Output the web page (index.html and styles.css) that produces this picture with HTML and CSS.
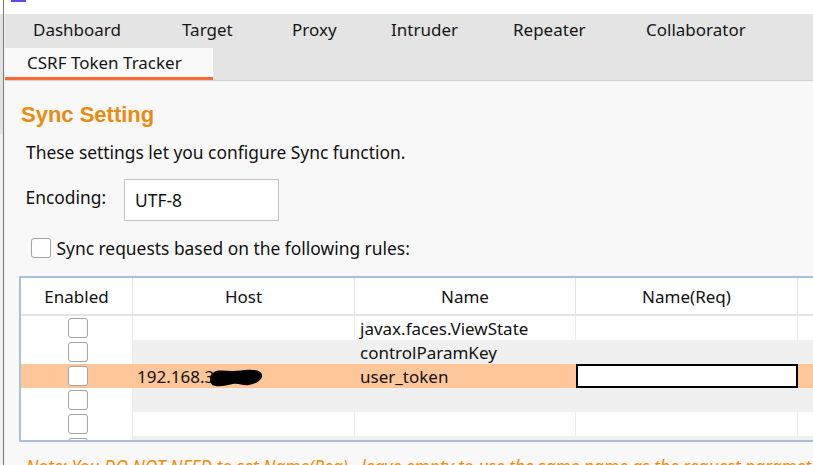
FILE: index.html
```html
<!DOCTYPE html>
<html>
<head>
<meta charset="utf-8">
<title>CSRF Token Tracker</title>
<link rel="stylesheet" href="styles.css">
</head>
<body>
<div class="screen">
  <div class="sliver"></div>
  <div class="app">
    <div class="topstrip"><span class="mark"></span></div>
    <div class="window">
      <div class="tabbar">
        <div class="main-tabs">
          <div class="tab">Dashboard</div>
          <div class="tab">Target</div>
          <div class="tab">Proxy</div>
          <div class="tab">Intruder</div>
          <div class="tab">Repeater</div>
          <div class="tab">Collaborator</div>
        </div>
        <div class="sub-tabs">
          <div class="subtab">CSRF Token Tracker</div>
        </div>
      </div>
      <div class="content">
        <h1 class="title">Sync Setting</h1>
        <p class="desc">These settings let you configure Sync function.</p>
        <div class="enc-row">
          <span class="enc-label">Encoding:</span>
          <div class="text-input">UTF-8</div>
        </div>
        <div class="check-row">
          <span class="cb"></span>
          <span class="check-label">Sync requests based on the following rules:</span>
        </div>
        <div class="rules">
          <div class="thead">
            <div class="th">Enabled</div>
            <div class="th">Host</div>
            <div class="th">Name</div>
            <div class="th">Name(Req)</div>
            <div class="th"></div>
          </div>
          <div class="tbody">
            <div class="tr">
              <div class="td cb-cell"><span class="cb"></span></div>
              <div class="td"></div>
              <div class="td">javax.faces.ViewState</div>
              <div class="td"></div>
              <div class="td"></div>
            </div>
            <div class="tr alt">
              <div class="td cb-cell"><span class="cb"></span></div>
              <div class="td"></div>
              <div class="td">controlParamKey</div>
              <div class="td"></div>
              <div class="td"></div>
            </div>
            <div class="tr sel">
              <div class="td cb-cell"><span class="cb"></span></div>
              <div class="td host">192.168.3<svg class="redact" viewBox="0 0 54 18" width="54" height="18"><path d="M2,7 C0,11 1,16 6,17 C12,18 18,16 24,15 C30,14 34,17 40,16 C46,15 52,12 53,8 C54,4 50,1 44,1 C36,0 30,2 24,2 C18,2 12,1 7,2 C4,3 3,5 2,7 Z" fill="#000"/></svg></div>
              <div class="td">user_token</div>
              <div class="td edit-cell"><div class="cell-input"></div></div>
              <div class="td"></div>
            </div>
            <div class="tr alt">
              <div class="td cb-cell"><span class="cb"></span></div>
              <div class="td"></div>
              <div class="td"></div>
              <div class="td"></div>
              <div class="td"></div>
            </div>
            <div class="tr">
              <div class="td cb-cell"><span class="cb"></span></div>
              <div class="td"></div>
              <div class="td"></div>
              <div class="td"></div>
              <div class="td"></div>
            </div>
            <div class="tr alt">
              <div class="td cb-cell"><span class="cb"></span></div>
              <div class="td"></div>
              <div class="td"></div>
              <div class="td"></div>
              <div class="td"></div>
            </div>
          </div>
        </div>
        <p class="note">Note: You DO NOT NEED to set Name(Req) , leave empty to use the same name as the request parameter.</p>
      </div>
    </div>
  </div>
</div>
</body>
</html>
```

FILE: styles.css
```css
* {
  box-sizing: border-box;
}

html,
body {
  margin: 0;
  padding: 0;
}

body {
  width: 813px;
  height: 465px;
  overflow: hidden;
  background: #ffffff;
  font-family: "Noto Sans", "Open Sans", sans-serif;
  color: #111111;
}

.screen {
  display: flex;
  height: 465px;
}

.sliver {
  flex: none;
  width: 4px;
  background: linear-gradient(#ffffff 0 14px, #e2e2e2 14px 134px, #f2f2f2 134px);
  border-right: 1px solid #7a7a7a;
}

.app {
  flex: 1;
  min-width: 0;
  display: flex;
  flex-direction: column;
}

.topstrip {
  flex: none;
  height: 14px;
  background: #ffffff;
  padding-left: 7px;
}

.mark {
  display: block;
  width: 15px;
  height: 2px;
  background: #5a4ff5;
}

.window {
  flex: 1;
  min-height: 0;
  overflow: hidden;
  border-left: 1px solid #f4f4f4;
  background: #f8f8f8;
  display: flex;
  flex-direction: column;
}

/* tabs */
.tabbar {
  flex: none;
  background: #e4e4e4;
  border-bottom: 1px solid #d3d5d5;
  font-size: 17px;
  color: #161616;
}

.main-tabs {
  display: grid;
  grid-template-columns: 149px 110px 99px 122px 133px auto;
  height: 34px;
}

.tab {
  padding: 4px 0 0 28px;
  line-height: 24px;
  white-space: nowrap;
}

.sub-tabs {
  display: flex;
  height: 32px;
}

.subtab {
  width: 208px;
  padding: 3px 0 0 22px;
  line-height: 24px;
  background: #f9f9f9;
  border-bottom: 3px solid #ff6a33;
  white-space: nowrap;
}

/* content */
.content {
  flex: 1;
  min-height: 0;
  padding: 20px 0 0 14px;
  background: #f8f8f8;
  font-size: 17.4px;
  line-height: 24px;
}

.title {
  margin: 0 0 0 2px;
  font: bold 22px/28px "Liberation Sans", Arial, sans-serif;
  color: #e98b10;
}

.desc {
  margin: 11px 0 0 7px;
}

.enc-row {
  display: flex;
  align-items: flex-start;
  margin: 15px 0 0 6.5px;
}

.enc-label {
  margin-top: 5.5px;
  width: 98.5px;
  white-space: nowrap;
}

.text-input {
  width: 155px;
  height: 42px;
  border: 1px solid #c6c6c6;
  background: #ffffff;
  padding-left: 10px;
  line-height: 41px;
}

.check-row {
  display: flex;
  align-items: center;
  height: 24px;
  margin: 14.5px 0 0 11.5px;
}

.check-label {
  margin-left: 6px;
  white-space: nowrap;
}

.cb {
  display: block;
  flex: none;
  width: 20px;
  height: 20px;
  border: 1.5px solid #a4a4a4;
  border-radius: 3px;
  background: #ffffff;
}

/* table */
.rules {
  width: 830px;
  margin-top: 16.5px;
  border: 2px solid #a8c0dd;
  border-right: none;
  background: #ffffff;
  font-size: 17px;
}

.thead,
.tr {
  display: grid;
  grid-template-columns: 112px 222px 221px 222px 1fr;
}

.thead {
  height: 38px;
  border-bottom: 2px solid #e4e4e4;
}

.th {
  border-right: 1px solid #e3e3e3;
  text-align: center;
  padding-top: 1px;
  line-height: 35px;
  white-space: nowrap;
}

.tbody {
  height: 124px;
  overflow: hidden;
}

.tr {
  height: 24px;
}

.td {
  position: relative;
  border-right: 1px solid #ececec;
  padding: 1px 0 0 5px;
  line-height: 23px;
  white-space: nowrap;
  background: #ffffff;
}

.tr.alt .td:not(:first-child) {
  background: #f0f0f0;
  border-right-color: #f0f0f0;
}

.tr.sel .td {
  background: #ffc699;
  border-right-color: #ffc699;
}

.td.cb-cell {
  padding: 2px 0 0 47px;
}

.td.host {
  padding-left: 4px;
}

.redact {
  position: absolute;
  left: 76px;
  top: 5px;
}

.td.edit-cell {
  padding: 0;
  border-right: none;
}

.cell-input {
  height: 24px;
  border: 2px solid #000000;
  background: #ffffff;
}

.note {
  margin: 12px 0 0 7px;
  font-style: italic;
  color: #f08c00;
  white-space: nowrap;
}
```
